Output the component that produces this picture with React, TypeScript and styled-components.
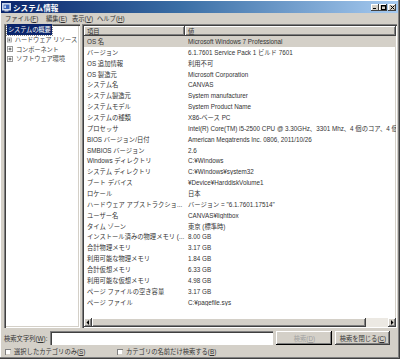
import React from "react";
import styled, { createGlobalStyle } from "styled-components";

const Global = createGlobalStyle`
  html, body { margin: 0; padding: 0; background: #d4d0c8; }
  #root { width: 400px; height: 359px; }
  * { box-sizing: border-box; }
`;

const FONT = `"Liberation Sans", "Noto Sans CJK JP", sans-serif`;

const Window = styled.div`
  width: 400px;
  height: 359px;
  background: #d4d0c8;
  font-family: ${FONT};
  font-size: 6.3px;
  color: #222;
  display: flex;
  flex-direction: column;
  border-right: 1px solid #404040;
  border-bottom: 1px solid #404040;
  box-shadow: inset -1px -1px 0 #808080, inset 1px 1px 0 #ffffff;
  overflow: hidden;
`;

const TitleBar = styled.div`
  height: 12px;
  margin: 1px 1px 0 1px;
  background: linear-gradient(90deg, #0a246a 0%, #3a6ea5 45%, #a6caf0 100%);
  display: flex;
  align-items: center;
  padding: 0 2px 0 1px;
  gap: 2px;
`;

const TitleText = styled.span`
  color: #fff;
  font-weight: bold;
  font-size: 7.6px;
  flex: 1;
`;

const CaptionButtons = styled.div`
  display: flex;
`;

const CaptionBtn = styled.div`
  width: 8px;
  height: 7px;
  background: #d4d0c8;
  box-shadow: inset -1px -1px 0 #404040, inset 1px 1px 0 #ffffff;
  display: flex;
  align-items: center;
  justify-content: center;
  &:last-child { margin-left: 1px; }
`;

const MenuBar = styled.div`
  height: 11px;
  display: flex;
  align-items: center;
  padding-left: 5px;
  gap: 7px;
  color: #333;
`;

const MenuItem = styled.span<{ $w: number }>`
  width: ${(p) => p.$w}px;
  flex-shrink: 0;
  white-space: nowrap;
`;

const Main = styled.div`
  height: 304px;
  display: flex;
  gap: 2px;
  padding: 0 2px 0 4px;
`;

const Sunken = styled.div`
  background: #fff;
  box-shadow: inset 1px 1px 0 #808080, inset 2px 2px 0 #404040, inset -1px -1px 0 #ffffff, inset -2px -2px 0 #d4d0c8;
  padding: 2px;
`;

const TreePane = styled(Sunken)`
  width: 76px;
  display: flex;
  flex-direction: column;
  padding-top: 1px;
  overflow: hidden;
`;

const TreeRow = styled.div`
  height: 9.7px;
  display: flex;
  align-items: center;
  gap: 2px;
  padding-left: 1px;
  white-space: nowrap;
  color: #333;
`;

const TreeLabel = styled.span<{ $selected?: boolean }>`
  background: ${(p) => (p.$selected ? "#0a246a" : "transparent")};
  color: ${(p) => (p.$selected ? "#fff" : "#444")};
  padding: 1px 1px;
  outline: ${(p) => (p.$selected ? "1px dotted #888" : "none")};
  letter-spacing: -0.2px;
`;

const ListPane = styled(Sunken)`
  flex: 1;
  display: flex;
  flex-direction: column;
  padding: 2px 1px 1px 2px;
  min-width: 0;
`;

const Header = styled.div`
  height: 10px;
  display: flex;
  background: #d4d0c8;
  flex-shrink: 0;
`;

const HeaderCell = styled.div<{ $w?: number }>`
  ${(p) => (p.$w ? `width: ${p.$w}px;` : "flex: 1;")}
  height: 100%;
  display: flex;
  align-items: center;
  padding-left: 3px;
  box-shadow: inset -1px -1px 0 #404040, inset 1px 1px 0 #ffffff, inset -2px -2px 0 #808080;
  color: #333;
`;

const Rows = styled.div`
  flex: 1;
  overflow: hidden;
`;

const Row = styled.div<{ $selected?: boolean }>`
  height: 10.87px;
  display: flex;
  align-items: center;
  background: ${(p) => (p.$selected ? "#d4d0c8" : "transparent")};
  white-space: nowrap;
`;

const Cell = styled.div<{ $w?: number }>`
  ${(p) => (p.$w ? `width: ${p.$w}px;` : "flex: 1;")}
  padding-left: 3px;
  overflow: hidden;
  white-space: nowrap;
  color: #333;
`;

const HScroll = styled.div`
  height: 9px;
  display: flex;
  flex-shrink: 0;
  background: #ece9e3;
`;

const ScrollBtn = styled.div`
  width: 8px;
  height: 9px;
  background: #d4d0c8;
  box-shadow: inset -1px -1px 0 #404040, inset 1px 1px 0 #ffffff, inset -2px -2px 0 #808080;
  display: flex;
  align-items: center;
  justify-content: center;
`;

const Thumb = styled.div<{ $w: number }>`
  width: ${(p) => p.$w}px;
  height: 9px;
  background: #d4d0c8;
  box-shadow: inset -1px -1px 0 #404040, inset 1px 1px 0 #ffffff, inset -2px -2px 0 #808080;
`;

const Track = styled.div`
  flex: 1;
`;

const SearchRow = styled.div`
  height: 18px;
  display: flex;
  align-items: center;
  padding: 2px 5px 0 4px;
  gap: 3px;
  color: #333;
`;

const Label = styled.span`
  white-space: nowrap;
`;

const Input = styled.div`
  width: 223px;
  height: 14px;
  background: #fff;
  box-shadow: inset 1px 1px 0 #808080, inset 2px 2px 0 #404040, inset -1px -1px 0 #ffffff;
`;

const Button = styled.div<{ $w: number; $disabled?: boolean }>`
  width: ${(p) => p.$w}px;
  height: 14px;
  background: #d4d0c8;
  display: flex;
  align-items: center;
  justify-content: center;
  color: ${(p) => (p.$disabled ? "#a0a0a0" : "#333")};
  box-shadow: ${(p) =>
    p.$disabled
      ? "inset -1px -1px 0 #000, inset 1px 1px 0 #ffffff, inset -2px -2px 0 #808080"
      : "inset -1px -1px 0 #404040, inset 1px 1px 0 #ffffff, inset -2px -2px 0 #808080"};
  white-space: nowrap;
`;

const CheckRow = styled.div`
  height: 11px;
  display: flex;
  align-items: center;
  padding-left: 5px;
  color: #333;
`;

const CheckItem = styled.label<{ $w?: number }>`
  display: flex;
  align-items: center;
  gap: 3px;
  ${(p) => (p.$w ? `width: ${p.$w}px;` : "")}
  white-space: nowrap;
`;

const CheckBox = styled.span`
  width: 6px;
  height: 6px;
  background: #fff;
  box-shadow: inset 1px 1px 0 #808080, inset -1px -1px 0 #d4d0c8;
  display: inline-block;
`;

const U = styled.span`
  text-decoration: underline;
`;

const PlusBox = () => (
  <svg width="6" height="6" viewBox="0 0 6 6">
    <rect x="0.5" y="0.5" width="5" height="5" fill="#fff" stroke="#999" strokeWidth="1" />
    <path d="M1.5 3h3M3 1.5v3" stroke="#333" strokeWidth="0.8" />
  </svg>
);

const AppIcon = () => (
  <svg width="9" height="9" viewBox="0 0 9 9">
    <rect x="0.5" y="0.5" width="8" height="6.5" fill="#e8eef8" stroke="#c8d4e8" />
    <rect x="1.5" y="1.5" width="6" height="4.5" fill="#3b64b8" />
    <rect x="2.5" y="2.5" width="1.2" height="2.5" fill="#fff" />
    <rect x="2.5" y="7" width="4" height="1.5" fill="#c0c8d8" />
  </svg>
);

const rows: [string, string][] = [
  ["OS 名", "Microsoft Windows 7 Professional"],
  ["バージョン", "6.1.7601 Service Pack 1 ビルド 7601"],
  ["OS 追加情報", "利用不可"],
  ["OS 製造元", "Microsoft Corporation"],
  ["システム名", "CANVAS"],
  ["システム製造元", "System manufacturer"],
  ["システムモデル", "System Product Name"],
  ["システムの種類", "X86-ベース PC"],
  ["プロセッサ", "Intel(R) Core(TM) i5-2500 CPU @ 3.30GHz、3301 Mhz、4 個のコア、4 個のロジカル プロセッサ"],
  ["BIOS バージョン/日付", "American Megatrends Inc. 0806, 2011/10/26"],
  ["SMBIOS バージョン", "2.6"],
  ["Windows ディレクトリ", "C:¥Windows"],
  ["システム ディレクトリ", "C:¥Windows¥system32"],
  ["ブート デバイス", "¥Device¥HarddiskVolume1"],
  ["ロケール", "日本"],
  ["ハードウェア アブストラクショ...", "バージョン = \"6.1.7601.17514\""],
  ["ユーザー名", "CANVAS¥lightbox"],
  ["タイム ゾーン", "東京 (標準時)"],
  ["インストール済みの物理メモリ (...", "8.00 GB"],
  ["合計物理メモリ", "3.17 GB"],
  ["利用可能な物理メモリ", "1.84 GB"],
  ["合計仮想メモリ", "6.33 GB"],
  ["利用可能な仮想メモリ", "4.98 GB"],
  ["ページ ファイルの空き容量", "3.17 GB"],
  ["ページ ファイル", "C:¥pagefile.sys"],
];

export default function App() {
  return (
    <>
      <Global />
      <Window>
        <TitleBar>
          <AppIcon />
          <TitleText>システム情報</TitleText>
          <CaptionButtons>
            <CaptionBtn>
              <svg width="4" height="4" viewBox="0 0 4 4"><path d="M0 3.5h3" stroke="#000" /></svg>
            </CaptionBtn>
            <CaptionBtn>
              <svg width="5" height="5" viewBox="0 0 5 5"><rect x="0.5" y="0.5" width="4" height="4" fill="none" stroke="#000" /><path d="M0 1h5" stroke="#000" /></svg>
            </CaptionBtn>
            <CaptionBtn>
              <svg width="5" height="5" viewBox="0 0 5 5"><path d="M0.5 0.5l4 4M4.5 0.5l-4 4" stroke="#000" /></svg>
            </CaptionBtn>
          </CaptionButtons>
        </TitleBar>
        <MenuBar>
          <MenuItem $w={34}>ファイル(<U>F</U>)</MenuItem>
          <MenuItem $w={19}>編集(<U>E</U>)</MenuItem>
          <MenuItem $w={18}>表示(<U>V</U>)</MenuItem>
          <MenuItem $w={24}>ヘルプ(<U>H</U>)</MenuItem>
        </MenuBar>
        <Main>
          <TreePane>
            <TreeRow>
              <TreeLabel $selected>システムの概要</TreeLabel>
            </TreeRow>
            <TreeRow><PlusBox /><TreeLabel>ハードウェア リソース</TreeLabel></TreeRow>
            <TreeRow><PlusBox /><TreeLabel>コンポーネント</TreeLabel></TreeRow>
            <TreeRow><PlusBox /><TreeLabel>ソフトウェア環境</TreeLabel></TreeRow>
          </TreePane>
          <ListPane>
            <Header>
              <HeaderCell $w={101}>項目</HeaderCell>
              <HeaderCell>値</HeaderCell>
            </Header>
            <Rows>
              {rows.map(([k, v], i) => (
                <Row key={k} $selected={i === 0}>
                  <Cell $w={101}>{k}</Cell>
                  <Cell>{v}</Cell>
                </Row>
              ))}
            </Rows>
            <HScroll>
              <ScrollBtn>
                <svg width="4" height="5" viewBox="0 0 4 5"><path d="M3 0v5L0.5 2.5z" fill="#000" /></svg>
              </ScrollBtn>
              <Thumb $w={274} />
              <Track />
              <ScrollBtn>
                <svg width="4" height="5" viewBox="0 0 4 5"><path d="M1 0v5l2.5-2.5z" fill="#000" /></svg>
              </ScrollBtn>
            </HScroll>
          </ListPane>
        </Main>
        <SearchRow>
          <Label>検索文字列(<U>W</U>):</Label>
          <Input />
          <Button $w={56} $disabled>検索(<U>D</U>)</Button>
          <Button $w={55}>検索を閉じる(<U>C</U>)</Button>
        </SearchRow>
        <CheckRow>
          <CheckItem $w={112}>
            <CheckBox />
            <span>選択したカテゴリのみ(<U>S</U>)</span>
          </CheckItem>
          <CheckItem>
            <CheckBox />
            <span>カテゴリの名前だけ検索する(<U>B</U>)</span>
          </CheckItem>
        </CheckRow>
      </Window>
    </>
  );
}
